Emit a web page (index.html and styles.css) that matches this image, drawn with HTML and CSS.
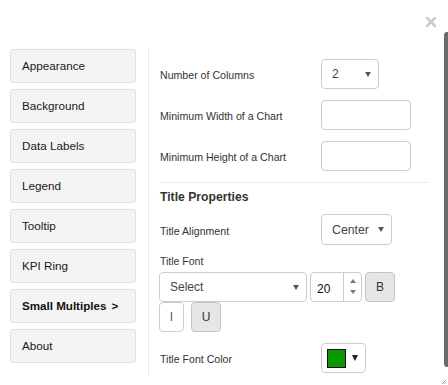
FILE: index.html
```html
<!DOCTYPE html>
<html>
<head>
<meta charset="utf-8">
<link rel="stylesheet" href="styles.css">
</head>
<body>
<div class="dialog">
  <svg class="close" width="10" height="10" viewBox="0 0 10 10"><path d="M1 1L9 9M9 1L1 9" stroke="#c9c9c9" stroke-width="2.6" stroke-linecap="square"/></svg>
  <div class="scrollbar"></div>
  <svg class="resize" width="6" height="6" viewBox="0 0 6 6"><path d="M1 5L5 1M3.5 5L5 3.5" stroke="#999" stroke-width="1"/></svg>
  <div class="layout">
    <nav class="nav">
      <div class="nav-btn">Appearance</div>
      <div class="nav-btn">Background</div>
      <div class="nav-btn">Data Labels</div>
      <div class="nav-btn">Legend</div>
      <div class="nav-btn">Tooltip</div>
      <div class="nav-btn">KPI Ring</div>
      <div class="nav-btn active">Small Multiples <span class="chev">&gt;</span></div>
      <div class="nav-btn">About</div>
    </nav>
    <main class="content">
      <div class="row">
        <span class="label">Number of Columns</span>
        <div class="select sel-cols"><span>2</span><i class="caret"></i></div>
      </div>
      <div class="row">
        <span class="label">Minimum Width of a Chart</span>
        <div class="textbox"></div>
      </div>
      <div class="row">
        <span class="label">Minimum Height of a Chart</span>
        <div class="textbox"></div>
      </div>
      <div class="rule"></div>
      <h3 class="heading">Title Properties</h3>
      <div class="row row-align">
        <span class="label">Title Alignment</span>
        <div class="select sel-align"><span>Center</span><i class="caret"></i></div>
      </div>
      <div class="label font-label">Title Font</div>
      <div class="font-tools">
        <div class="select sel-font"><span>Select</span><i class="caret"></i></div>
        <div class="number">
          <span class="num-val">20</span>
          <div class="spin"><i class="up"></i><i class="down"></i></div>
        </div>
        <div class="tbtn tbtn-b on">B</div>
        <div class="tbtn tbtn-i">I</div>
        <div class="tbtn tbtn-u on">U</div>
      </div>
      <div class="row row-color">
        <span class="label">Title Font Color</span>
        <div class="picker"><span class="swatch"></span><i class="caret dark"></i></div>
      </div>
    </main>
  </div>
</div>
</body>
</html>
```
FILE: styles.css
```css
* { box-sizing: border-box; }
html, body { margin: 0; padding: 0; background: #fff; }
body { font-family: "Liberation Sans", Arial, sans-serif; color: #333; }

.dialog { position: relative; width: 448px; height: 385px; overflow: hidden; }

.close { position: absolute; left: 426px; top: 17px; }
.scrollbar { position: absolute; left: 444px; top: 32px; width: 4px; height: 335px; background: #6b6b6b; border-radius: 3px 0 0 3px; }
.resize { position: absolute; left: 441px; top: 379px; }

.layout { display: flex; padding: 48px 0 0 10px; }

.nav { width: 126px; margin-right: 12px; padding-top: 1px; display: flex; flex-direction: column; gap: 6px; }
.nav-btn {
  height: 34px; display: flex; align-items: center; padding-left: 11px; padding-bottom: 1px;
  background: #f4f4f4; border: 1px solid #e0e0e0; border-radius: 3px;
  font-size: 11.7px; color: #1a1a1a;
}
.nav-btn.active { font-weight: bold; color: #111; font-size: 11.6px; }
.chev { margin-left: 5px; }

.content { width: 282px; height: 328px; border-left: 1px solid #ebebeb; padding: 11px 0 0 11px; }

.row { display: flex; align-items: center; height: 30px; margin-bottom: 11px; }
.label { font-size: 10.6px; color: #333; }
.row .label { width: 161px; flex: none; padding-top: 2px; }

.select, .textbox, .number, .picker, .tbtn {
  border: 1px solid #ccc; border-radius: 4px; background: #fff;
}
.select { display: flex; align-items: center; justify-content: space-between; height: 30px; font-size: 12px; color: #444; padding: 0 7px 0 10px; }
.sel-cols { width: 58px; }
.sel-align { width: 71px; height: 31px; font-size: 12.3px; }
.textbox { width: 90px; height: 30px; }

.caret { display: block; width: 0; height: 0; border-left: 3px solid transparent; border-right: 3px solid transparent; border-top: 5px solid #555; }
.caret.dark { border-left-width: 3.5px; border-right-width: 3.5px; border-top: 6px solid #222; }

.rule { height: 1px; background: #ececec; width: 269px; margin: 1px 0 7px; }
.heading { margin: 0 0 10px; font-size: 12.2px; font-weight: bold; color: #333; line-height: 14px; }
.row-align { height: 31px; margin-bottom: 9px; }

.font-label { line-height: 12px; font-size: 10.5px; margin-bottom: 5px; padding-top: 1px; }

.font-tools { display: flex; flex-wrap: wrap; width: 240px; margin-left: -1px; margin-bottom: 11px; }
.sel-font { width: 148px; height: 30px; padding-left: 10px; padding-right: 7px; }
.number { display: flex; width: 52px; height: 30px; margin-left: 3px; }
.num-val { flex: 1; font-size: 12px; color: #111; padding: 9px 0 0 6px; }
.spin { width: 18px; border-left: 1px solid #ccc; display: flex; flex-direction: column; justify-content: space-between; align-items: center; padding: 6px 0 7px; }
.up { width: 0; height: 0; border-left: 3.5px solid transparent; border-right: 3.5px solid transparent; border-bottom: 4px solid #777; }
.down { width: 0; height: 0; border-left: 3.5px solid transparent; border-right: 3.5px solid transparent; border-top: 4px solid #777; }

.tbtn { height: 30px; display: flex; align-items: center; justify-content: center; font-size: 12px; color: #333; border-color: #ccc; }
.tbtn.on { background: #e6e6e6; border-color: #c4c4c4; }
.tbtn-b { width: 30px; margin-left: 3px; }
.tbtn-i { width: 25px; color: #3d5f8f; }
.tbtn-u { width: 30px; margin-left: 7px; }

.row-color { height: 30px; }
.picker { width: 45px; height: 30px; display: flex; align-items: center; padding-left: 5px; }
.swatch { width: 19px; height: 19px; background: #0a9a00; border: 1px solid #111; margin-right: 6px; }
```
